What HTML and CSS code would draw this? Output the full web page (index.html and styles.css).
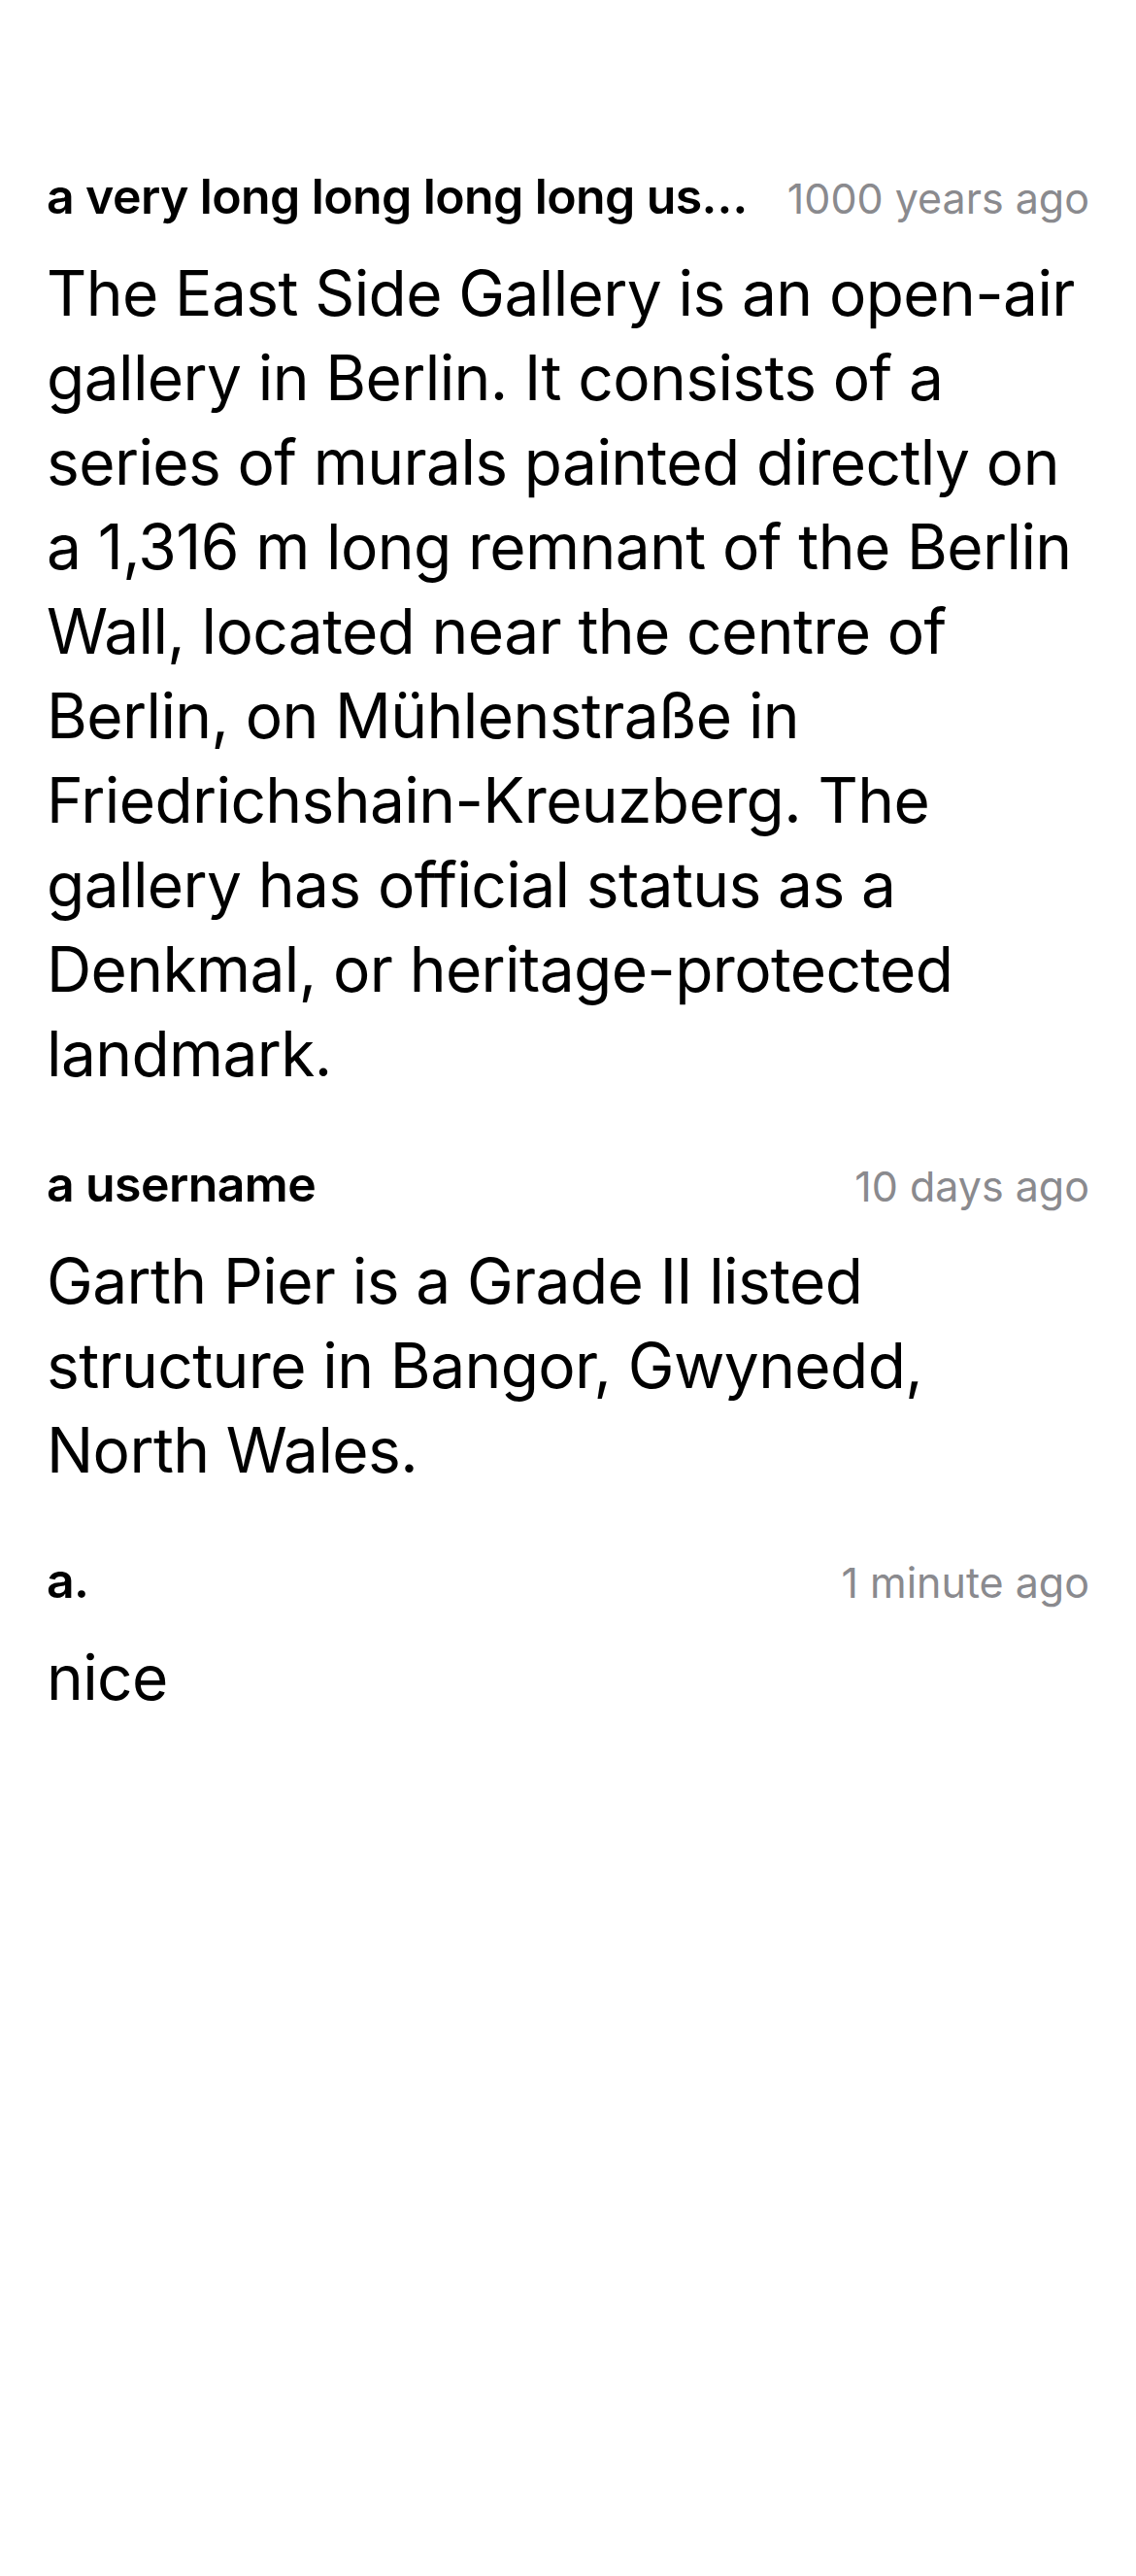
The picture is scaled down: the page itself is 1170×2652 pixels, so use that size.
FILE: index.html
```html
<!DOCTYPE html>
<html lang="en">
<head>
<meta charset="utf-8">
<title>Comments</title>
<link rel="stylesheet" href="styles.css">
</head>
<body>
<main class="comments">
  <article class="comment">
    <header class="comment-header">
      <span class="comment-user" title="a very long long long long username">a very long long long long us…</span>
      <span class="comment-time">1000 years ago</span>
    </header>
    <p class="comment-body">The East Side Gallery is an open-air gallery in Berlin. It consists of a series of murals painted directly on a 1,316&nbsp;m long remnant of the Berlin Wall, located near the centre of Berlin, on Mühlenstraße in Friedrichshain-Kreuzberg. The gallery has official status as a Denkmal, or heritage-protected landmark.</p>
  </article>
  <article class="comment">
    <header class="comment-header">
      <span class="comment-user">a username</span>
      <span class="comment-time">10 days ago</span>
    </header>
    <p class="comment-body">Garth Pier is a Grade II listed structure in Bangor, Gwynedd, North Wales.</p>
  </article>
  <article class="comment">
    <header class="comment-header">
      <span class="comment-user">a.</span>
      <span class="comment-time">1 minute ago</span>
    </header>
    <p class="comment-body">nice</p>
  </article>
</main>
</body>
</html>
```
FILE: styles.css
```css
html, body {
  margin: 0;
  padding: 0;
  background: #ffffff;
}

body {
  width: 1170px;
  min-height: 2652px;
  font-family: Inter, "Noto Sans", "Liberation Sans", sans-serif;
  color: #000000;
}

.comments {
  display: flex;
  flex-direction: column;
  gap: 61px;
  padding: 172px 48px 0 48px;
}

.comment {
  display: flex;
  flex-direction: column;
}

.comment-header {
  display: flex;
  align-items: baseline;
  justify-content: space-between;
  gap: 12px;
  margin-bottom: 24px;
}

.comment-user {
  flex: 1 1 auto;
  min-width: 0;
  font-size: 50px;
  line-height: 60px;
  font-weight: 600;
  letter-spacing: -0.6px;
  white-space: nowrap;
  overflow: hidden;
  text-overflow: ellipsis;
}

.comment-time {
  flex: 0 0 auto;
  font-size: 43px;
  line-height: 60px;
  font-weight: 400;
  color: #8a8a8e;
  white-space: nowrap;
}

.comment-body {
  margin: 0;
  font-size: 64px;
  line-height: 87px;
  font-weight: 400;
  letter-spacing: -0.6px;
}
```
